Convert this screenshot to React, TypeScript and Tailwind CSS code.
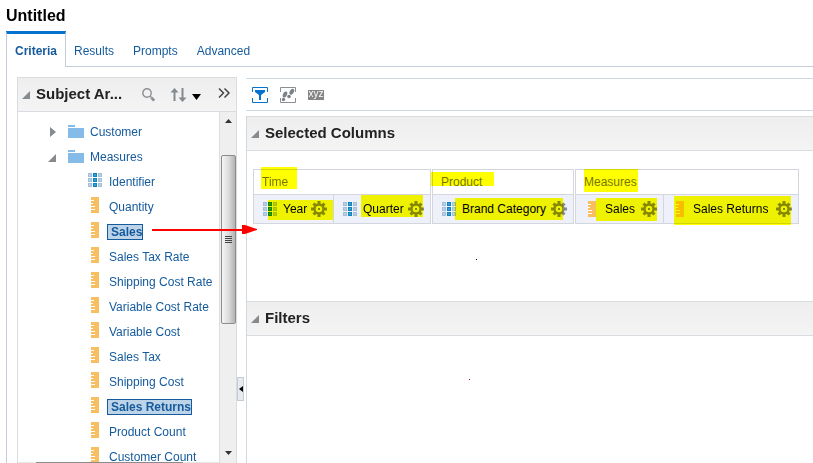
import { useState, type ReactNode } from "react";

type Kind = "attribute" | "measure";

type Field = { label: string; kind: Kind; added?: boolean };

const fields: Field[] = [
  { label: "Identifier", kind: "attribute" },
  { label: "Quantity", kind: "measure" },
  { label: "Sales", kind: "measure", added: true },
  { label: "Sales Tax Rate", kind: "measure" },
  { label: "Shipping Cost Rate", kind: "measure" },
  { label: "Variable Cost Rate", kind: "measure" },
  { label: "Variable Cost", kind: "measure" },
  { label: "Sales Tax", kind: "measure" },
  { label: "Shipping Cost", kind: "measure" },
  { label: "Sales Returns", kind: "measure", added: true },
  { label: "Product Count", kind: "measure" },
  { label: "Customer Count", kind: "measure" },
];

type Column = { label: string; kind: Kind; width: string; mark: string };

type Group = { name: string; width: string; mark: string; columns: Column[] };

const groups: Group[] = [
  {
    name: "Time",
    width: "w-[178px]",
    mark: "left-[7px] -top-[3px] w-9 h-[22px]",
    columns: [
      { label: "Year", kind: "attribute", width: "w-[79px]", mark: "left-[14px] right-0 top-[5px] h-5" },
      { label: "Quarter", kind: "attribute", width: "w-[97px]", mark: "left-[27px] right-[7px] top-0 h-[22px]" },
    ],
  },
  {
    name: "Product",
    width: "w-[142px]",
    mark: "-left-[2px] top-[2px] w-[63px] h-[14px]",
    columns: [
      { label: "Brand Category", kind: "attribute", width: "w-[140px]", mark: "left-[22px] right-[10px] top-[3px] h-[22px]" },
    ],
  },
  {
    name: "Measures",
    width: "w-[224px]",
    mark: "left-2 -top-px w-[54px] h-[23px]",
    columns: [
      { label: "Sales", kind: "measure", width: "w-[87px]", mark: "left-5 right-[6px] top-[3px] h-[23px]" },
      { label: "Sales Returns", kind: "measure", width: "w-[135px]", mark: "left-[10px] right-[7px] top-px h-[29px]" },
    ],
  },
];

function AttributeIcon() {
  return (
    <svg width="14" height="14" viewBox="0 0 14 14" shapeRendering="crispEdges" aria-hidden="true">
      {[0, 5, 10].map((y) => (
        <g key={y}>
          <rect x="0" y={y} width="4" height="4" fill="#a3c0d8" />
          <rect x="1" y={y + 1} width="2" height="2" fill="#b9cfe2" />
          <rect x="5" y={y} width="4" height="4" fill="#1383bd" />
          <rect x="6" y={y + 1} width="2" height="2" fill="#2e9fd6" />
          <rect x="10" y={y} width="4" height="4" fill="#a3c0d8" />
          <rect x="11" y={y + 1} width="2" height="2" fill="#b9cfe2" />
        </g>
      ))}
    </svg>
  );
}

function MeasureIcon() {
  return (
    <svg width="14" height="16" viewBox="0 0 14 16" shapeRendering="crispEdges" aria-hidden="true">
      <rect x="3" y="0" width="8" height="16" fill="#f7be62" />
      <path d="M3 3.5h3M3 6.5h2M3 9.5h4M3 12.5h4" stroke="#fff" fill="none" />
    </svg>
  );
}

function FieldIcon({ kind }: { kind: Kind }) {
  return kind === "attribute" ? <AttributeIcon /> : <MeasureIcon />;
}

function FolderIcon() {
  return (
    <svg width="16" height="13" viewBox="0 0 16 13" shapeRendering="crispEdges" aria-hidden="true">
      <path d="M0 0h7v2H0zM0 3h16v10H0z" fill="#84bbe8" />
    </svg>
  );
}

function GearIcon() {
  return (
    <svg width="16" height="16" viewBox="0 0 16 16" aria-hidden="true">
      <g stroke="#85888c" strokeWidth="3">
        <path d="M8 0v4M8 12v4M0 8h4M12 8h4" />
        <path d="M2.500 2.500l2.500 2.500M11 11l2.500 2.500M13.500 2.500l-2.500 2.500M5 11l-2.500 2.500" />
      </g>
      <circle cx="8" cy="8" r="4.500" fill="#eef1f9" stroke="#85888c" strokeWidth="2.400" />
      <rect x="7" y="7" width="2" height="2" fill="#85888c" />
    </svg>
  );
}

function OpenTriangle() {
  return (
    <svg width="8" height="8" viewBox="0 0 8 8" aria-hidden="true">
      <path d="M8 0v8H0z" fill="#858a8f" />
    </svg>
  );
}

function Mark({ className }: { className: string }) {
  return <span className={`pointer-events-none absolute bg-[#ffff00] mix-blend-multiply ${className}`} />;
}

function Section({ title, first, children }: { title: string; first?: boolean; children: ReactNode }) {
  return (
    <section className={first ? "h-[185px]" : "grow"}>
      <h2 className="border-y border-[#d9dde1] bg-linear-to-b from-[#eeeeee] to-[#f4f4f4] text-[#222222]">
        <button type="button" className="flex h-[33px] w-full items-center gap-[6px] pl-1 text-[15px] font-bold">
          <OpenTriangle />
          {title}
        </button>
      </h2>
      {children}
    </section>
  );
}

function GroupTable({ group }: { group: Group }) {
  return (
    <table className={`${group.width} table-fixed border-separate border-spacing-0 border border-[#d3d6dd] text-[12px]`}>
      <colgroup>
        {group.columns.map((c) => (
          <col key={c.label} className={c.width} />
        ))}
      </colgroup>
      <thead>
        <tr>
          <th colSpan={group.columns.length} className="relative h-6 bg-white p-0 pl-2 text-left font-normal text-[#777777]">
            {group.name}
            <Mark className={group.mark} />
          </th>
        </tr>
      </thead>
      <tbody>
        <tr>
          {group.columns.map((c, i) => (
            <td
              key={c.label}
              className={`relative h-[29px] border-t border-[#d3d6dd] bg-[#eef1f9] p-0 ${i > 0 ? "border-l" : ""}`}
            >
              <div className="flex items-center pr-[6px] pl-[9px] text-black">
                <FieldIcon kind={c.kind} />
                <span className="ml-[6px] grow whitespace-nowrap">{c.label}</span>
                <button type="button" aria-label={`${c.label} options`}>
                  <GearIcon />
                </button>
              </div>
              <Mark className={c.mark} />
            </td>
          ))}
        </tr>
      </tbody>
    </table>
  );
}

function SubjectAreas() {
  return (
    <aside className="flex w-[220px] shrink-0 flex-col border border-b-0 border-[#d9dde1]">
      <div className="flex h-[34px] shrink-0 items-center border-b border-[#d9dde1] bg-linear-to-b from-[#eeeeee] to-[#f4f4f4] pl-1 text-[#222222]">
        <OpenTriangle />
        <h2 className="ml-[6px] grow text-[15px] font-bold">Subject Ar...</h2>
        <button type="button" aria-label="Search" className="mr-[14px]">
          <svg width="15" height="16" viewBox="0 0 15 16" fill="none" stroke="#8b8f93" aria-hidden="true">
            <circle cx="6" cy="6" r="4.2" strokeWidth="1.4" />
            <path d="M9 9l1.5 1.5" strokeWidth="1.4" />
            <path d="M10.3 10.6l2.9 3" strokeWidth="2.8" />
          </svg>
        </button>
        <button type="button" aria-label="Sort" className="mr-4">
          <svg width="32" height="16" viewBox="0 0 32 16" aria-hidden="true">
            <path d="M4.500 1L8.500 5.500H5.500V14h-2V5.500h-3zM11.500 1h2v9.500h3L12.500 15l-4-4.500h3z" fill="#858a8f" />
            <path d="M22 7h9L26.500 13z" fill="#000" />
          </svg>
        </button>
        <button type="button" aria-label="Expand pane" className="mr-[6px] pb-[3px]">
          <svg width="12" height="12" viewBox="0 0 12 12" fill="none" stroke="#444" strokeWidth="1.5" aria-hidden="true">
            <path d="M1 1.500l4.500 4.500L1 10.500M6.500 1.500L11 6l-4.500 4.500" />
          </svg>
        </button>
      </div>
      <div className="flex min-h-0 grow">
        <div className="flex min-w-0 grow flex-col">
          <ul className="min-h-0 grow overflow-hidden pt-[7px] text-[12px] text-[#145a9c]">
            <li className="flex h-[25px] items-center pl-8">
              <button type="button" className="flex items-center">
                <svg width="6" height="10" viewBox="0 0 6 10" className="mr-3" aria-hidden="true">
                  <path d="M0 0l6 5-6 5z" fill="#858a8f" />
                </svg>
                <FolderIcon />
                <span className="ml-[6px]">Customer</span>
              </button>
            </li>
            <li>
              <button type="button" className="flex h-[25px] items-center pl-[30px]">
                <span className="mr-3 pt-[3px]">
                  <OpenTriangle />
                </span>
                <FolderIcon />
                <span className="ml-[6px]">Measures</span>
              </button>
              <ul>
                {fields.map((f) => (
                  <li key={f.label} className="flex h-[25px] items-center pl-[70px]">
                    <span className="pb-[3px]">
                      <FieldIcon kind={f.kind} />
                    </span>
                    <button
                      type="button"
                      className={
                        f.added
                          ? "ml-[5px] border border-[#145a9c] bg-[#bdd3e8] pl-[3px] leading-[14px] font-bold whitespace-nowrap"
                          : "ml-[7px] whitespace-nowrap"
                      }
                    >
                      {f.label}
                    </button>
                  </li>
                ))}
              </ul>
            </li>
          </ul>
          <div className="h-px shrink-0 bg-[#e6e6e6] pr-9 pl-[18px]">
            <div className="h-full bg-[#8c8c8c]" />
          </div>
        </div>
        <div className="flex w-[17px] shrink-0 flex-col items-center border-l border-[#dddddd] bg-[#efefef]">
          <svg width="7" height="4" viewBox="0 0 7 4" className="mt-[7px]" aria-hidden="true">
            <path d="M3.500 0L7 4H0z" fill="#333" />
          </svg>
          <div className="mt-8 flex h-[169px] w-[15px] shrink-0 flex-col items-center justify-center gap-px rounded-[2px] border border-[#8c8c8c] bg-linear-to-r from-[#f5f5f5] via-[#dcdcdc] to-[#b4b4b4]">
            <span className="h-px w-[7px] bg-[#444444]" />
            <span className="h-px w-[7px] bg-[#444444]" />
            <span className="h-px w-[7px] bg-[#444444]" />
            <span className="h-px w-[7px] bg-[#444444]" />
          </div>
          <svg width="7" height="4" viewBox="0 0 7 4" className="mt-auto mb-2" aria-hidden="true">
            <path d="M0 0h7L3.500 4z" fill="#333" />
          </svg>
        </div>
      </div>
    </aside>
  );
}

function Toolbar() {
  return (
    <div className="flex h-[33px] shrink-0 items-center gap-3 border-y border-[#ced9e2] pl-[6px]">
      <button type="button" aria-label="Filter pane">
        <svg width="16" height="16" viewBox="0 0 16 16" aria-hidden="true">
          <path d="M.5 5V.5h15V5M.5 11v4.500h15V11" fill="none" stroke="#0572ce" />
          <path d="M3 3h10v2L9 8v5H7V8L3 5z" fill="#0572ce" />
        </svg>
      </button>
      <button type="button" aria-label="Selection steps">
        <svg width="16" height="16" viewBox="0 0 16 16" aria-hidden="true">
          <path d="M.5 5V.5h15V5M.5 11v4.500h15V11" fill="none" stroke="#8b8f93" />
          <g fill="#7d8286">
            <ellipse cx="5" cy="7.500" rx="2" ry="3.200" transform="rotate(25 5 7.500)" />
            <ellipse cx="3.500" cy="12.500" rx="1.700" ry="1.700" />
            <ellipse cx="11.800" cy="4.800" rx="2" ry="3.200" transform="rotate(30 11.800 4.800)" />
            <ellipse cx="9" cy="9.500" rx="1.800" ry="1.700" />
          </g>
        </svg>
      </button>
      <button
        type="button"
        aria-label="Rename column headings"
        className="flex h-[10px] w-4 items-center justify-center bg-[#858585] pb-[2px] text-[10px] leading-[10px] text-white"
      >
        xyz
      </button>
    </div>
  );
}

export default function App() {
  const tabs = ["Criteria", "Results", "Prompts", "Advanced"];
  const [active, setActive] = useState("Criteria");

  return (
    <div className="relative flex h-screen flex-col overflow-hidden bg-white pl-[6px] font-['Liberation_Sans',Arial,sans-serif] text-[12px]">
      <h1 className="h-[31px] shrink-0 pt-1 text-[16px] leading-6 font-bold text-black">Untitled</h1>
      <nav className="flex h-9 shrink-0">
        {tabs.map((tab) => (
          <button
            key={tab}
            type="button"
            onClick={() => setActive(tab)}
            className={
              tab === active
                ? "w-[60px] border-x border-t-3 border-x-[#c4ccd8] border-t-[#0572ce] font-bold text-[#145a9c]"
                : "border-b border-[#c4ccd8] pt-1 pr-[11px] pl-2 text-[#145a9c]"
            }
          >
            {tab}
          </button>
        ))}
        <div className="grow border-b border-[#c4ccd8]" />
      </nav>
      <main className="flex min-h-0 grow border-l border-[#c4ccd8] pt-[10px] pl-[10px]">
        <SubjectAreas />
        <div className="flex w-[9px] shrink-0 items-start">
          <button
            type="button"
            aria-label="Collapse pane"
            className="mt-[300px] flex h-6 w-[7px] items-center justify-center border border-[#c4ccd8] bg-[#e8ebee]"
          >
            <svg width="4" height="6" viewBox="0 0 4 6" aria-hidden="true">
              <path d="M4 0v6L0 3z" fill="#000" />
            </svg>
          </button>
        </div>
        <div className="flex min-w-0 grow flex-col pt-px">
          <Toolbar />
          <div className="mt-[5px] flex grow flex-col border-l border-[#ced9e2]">
            <Section title="Selected Columns" first>
              <div className="flex gap-px pt-[18px] pl-[6px]">
                {groups.map((g) => (
                  <GroupTable key={g.name} group={g} />
                ))}
              </div>
            </Section>
            <Section title="Filters">{null}</Section>
          </div>
        </div>
      </main>
      <svg className="pointer-events-none absolute top-[224px] left-[152px]" width="106" height="12" viewBox="0 0 106 12" aria-hidden="true">
        <path d="M0 5h92v2H0z" fill="#f00" />
        <path d="M90 1h3l12 4v1l-12 4h-3z" fill="#f00" />
      </svg>
      <span className="absolute top-[259px] left-[476px] size-px bg-black" />
      <span className="absolute top-[379px] left-[469px] size-px bg-[#cc0000]" />
    </div>
  );
}
